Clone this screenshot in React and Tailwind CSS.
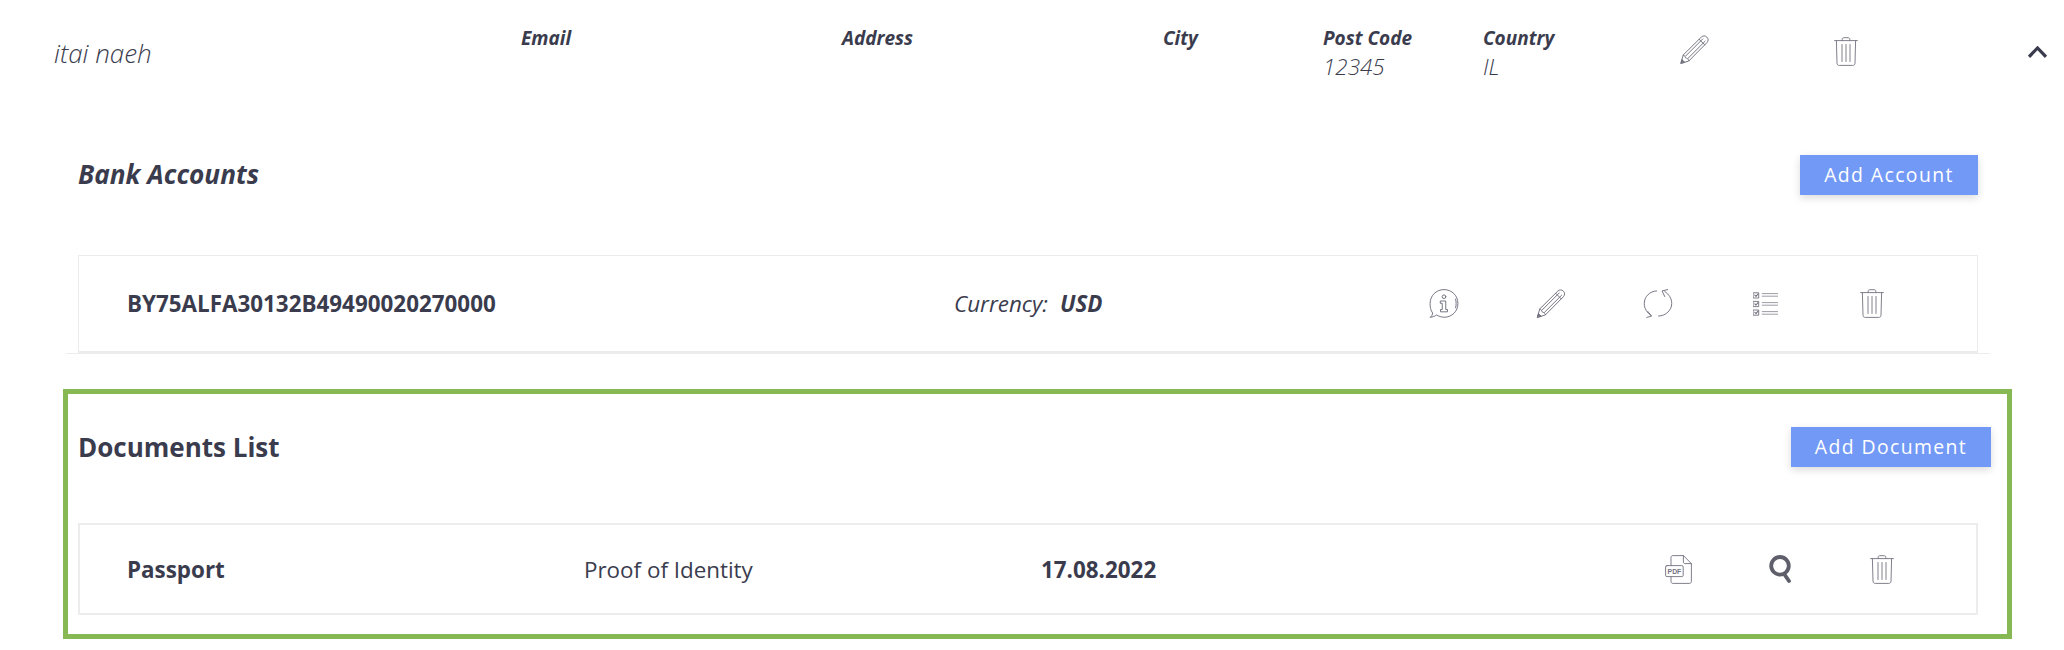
const S = "#72727f";

function Trash({ className }) {
  return (
    <svg viewBox="0 0 24 29" className={className} fill="none" stroke={S} strokeWidth="0.9" strokeLinecap="round" strokeLinejoin="round">
      <path d="M0.6 3.6H23.4" />
      <path d="M8.2 3.4V2.2C8.2 1.2 9 0.7 10 0.7H14C15 0.7 15.8 1.2 15.8 2.2V3.4" />
      <path d="M2.4 3.8L3 26.2C3 27.6 3.9 28.4 5.3 28.4H18.7C20.1 28.4 21 27.6 21 26.2L21.6 3.8" />
      <path d="M8 7.5V24.5M12 7.5V24.5M16 7.5V24.5" />
    </svg>
  );
}

function Pencil({ className }) {
  return (
    <svg viewBox="0 0 30 30" className={className} fill="none" stroke={S} strokeWidth="1" strokeLinejoin="round" strokeLinecap="round">
      <path d="M1 29L3.4 20.6L22 2.2C23.8 0.5 26.2 0.6 27.8 2.2C29.5 3.9 29.5 6.2 27.8 8L9.4 26.6Z" />
      <path d="M3.4 20.6C5 20.8 5.2 22.6 5.8 23.6C7 24.2 9 24.6 9.4 26.6" />
      <path d="M6 21.6L23.6 4M8.4 24L26 6.4M19.8 4.4L25.6 10.2" />
      <path d="M1 29L2 25.4L4.6 28Z" fill={S} />
    </svg>
  );
}

function Info({ className }) {
  return (
    <svg viewBox="0 0 30 30" className={className} fill="none" stroke={S} strokeWidth="1" strokeLinejoin="round" strokeLinecap="round">
      <path d="M1 29.2C2.4 28 3.2 26.4 3.2 24.8C1.2 22 0.6 18.8 0.6 15.2C0.6 7 6.8 0.6 15 0.6C23.2 0.6 29.4 7 29.4 15C29.4 23 23.2 29.2 15.4 29.2C12.2 29.2 9.6 28.2 7.4 26.8C5.6 28.2 3.4 29 1 29.2Z" />
      <path d="M27 10.5C27.8 13 27.8 17 27 19.5" />
      <circle cx="15" cy="8" r="1.9" />
      <path d="M11.6 12.4H16.8V21.2H18.6V23.6H11.4V21.2H13.2V14.8H11.6Z" />
    </svg>
  );
}

function Refresh({ className }) {
  return (
    <svg viewBox="0 0 30 30" className={className} fill="none" stroke={S} strokeWidth="1" strokeLinejoin="round" strokeLinecap="round">
      <path d="M13.6 2C6.4 2.2 0.8 8 0.8 15C0.8 20 3.4 24.4 7.8 27.4" />
      <path d="M4.4 23.2L8.4 28L3.4 29.4" />
      <path d="M15.6 28C23 27.8 29.2 22 29.2 15C29.2 10 26.6 5.6 22 2.6" />
      <path d="M25 0.6L19.2 2L22 7.8" />
    </svg>
  );
}

function Checklist({ className }) {
  return (
    <svg viewBox="0 0 25 24" className={className} fill="none" stroke={S} strokeWidth="0.9" strokeLinecap="round" strokeLinejoin="round">
      <rect x="0.5" y="0.8" width="5.2" height="5.2" />
      <rect x="0.5" y="9.4" width="5.2" height="5.2" />
      <rect x="0.5" y="18" width="5.2" height="5.2" />
      <path d="M1.8 3.2L3 4.4L5 2M1.8 11.8L3 13L5 10.6M1.8 20.4L3 21.6L5 19.2" strokeWidth="1.1" />
      <path d="M9.2 1.6H24.6M9.2 4.2H24.6M9.2 10.6H24.6M9.2 13.2H24.6M9.2 19.6H24.6M9.2 22.2H24.6" strokeWidth="0.7" />
    </svg>
  );
}

function Pdf({ className }) {
  return (
    <svg viewBox="0 0 27 29" className={className} fill="none" stroke={S} strokeWidth="0.9" strokeLinejoin="round" strokeLinecap="round">
      <path d="M6 10.5V2.4C6 1.3 6.8 0.6 8 0.6H18.4L26.4 8.6V26.4C26.4 27.6 25.6 28.4 24.4 28.4H8C6.8 28.4 6 27.6 6 26.4V21.6" />
      <path d="M18.4 0.6V7C18.4 8 19 8.6 20 8.6H26.4" />
      <rect x="0.6" y="10.6" width="17.6" height="11" rx="1.4" />
      <text x="9.4" y="18.8" textAnchor="middle" fontSize="6.8" fontWeight="700" fill={S} stroke="none" fontFamily="'Liberation Sans', sans-serif">PDF</text>
    </svg>
  );
}

function Search({ className }) {
  return (
    <svg viewBox="0 0 22 28" className={className} fill="none" stroke="#5f5f6b" strokeWidth="3.8" strokeLinecap="round">
      <circle cx="11" cy="10.8" r="8.8" />
      <path d="M15.4 19.4L20 26" />
    </svg>
  );
}

function Chevron({ className }) {
  return (
    <svg viewBox="0 0 19 12" className={className} fill="none" stroke="#3a3c4e" strokeWidth="3.2">
      <path d="M1 10.8L9.5 2L18 10.8" />
    </svg>
  );
}

function Field({ label, value, width }) {
  return (
    <div className={width}>
      <div className="font-bold italic text-[19px] leading-[28px]">{label}</div>
      <div className="italic font-light text-[22.4px] leading-[29px]">{value}</div>
    </div>
  );
}

function AddButton({ children, className }) {
  return (
    <button className={`h-10 bg-[#7299f5] text-white text-[19.4px] tracking-[1.4px] shadow-[0_3px_8px_rgba(0,0,0,0.14)] ${className}`}>
      {children}
    </button>
  );
}

export default function App() {
  return (
    <div className="w-[2064px] h-[650px] bg-white overflow-hidden text-[#3a3c4e] font-['Open_Sans',sans-serif]">
      <div className="flex items-start h-[100px] pl-[54px] pt-[24px]">
        <div className="w-[467px] italic font-light text-[26px] leading-[32px] pt-[13px]">itai naeh</div>
        <Field label="Email" value="" width="w-[321px]" />
        <Field label="Address" value="" width="w-[321px]" />
        <Field label="City" value="" width="w-[160px]" />
        <Field label="Post Code" value="12345" width="w-[160px]" />
        <Field label="Country" value="IL" width="w-[197px]" />
        <Pencil className="w-[29px] h-[29px] mt-[11px] shrink-0" />
        <Trash className="w-[24px] h-[29px] ml-[125px] mt-[13px] shrink-0" />
        <Chevron className="w-[19px] h-[12px] ml-[170px] mt-[22px] shrink-0" />
      </div>

      <div className="pl-[78px] pr-[86px] pt-[55px] flex items-center justify-between">
        <h2 className="font-bold italic text-[26.2px] leading-[36px] -mt-[2px]">Bank Accounts</h2>
        <AddButton className="w-[178px]">Add Account</AddButton>
      </div>

      <div className="mt-[60px] ml-[66px] w-[1924px] px-[12px] border-b border-[#ececec]">
        <div className="h-[99px] -mb-px flex items-center pl-[48px] border border-b-[3px] border-[#ececec]">
          <div className="w-[827px] font-bold text-[22.4px] leading-[30px]">BY75ALFA30132B49490020270000</div>
          <div className="w-[475px] text-[22.4px] leading-[30px] italic flex">
            <span className="w-[106px]">Currency:</span>
            <span className="font-bold">USD</span>
          </div>
          <div className="flex items-center gap-[77px]">
            <Info className="w-[30px] h-[29px] shrink-0" />
            <Pencil className="w-[30px] h-[29px] shrink-0" />
            <Refresh className="w-[30px] h-[29px] shrink-0" />
            <div className="w-[30px] flex justify-center shrink-0"><Checklist className="w-[25px] h-[24px]" /></div>
            <div className="w-[30px] flex justify-center shrink-0"><Trash className="w-[24px] h-[29px]" /></div>
          </div>
        </div>
      </div>

      <div className="mt-[35px] ml-[63px] w-[1949px] h-[250px] border-[5px] border-[#86b953] pl-[10px] pr-[29px] pt-[33px]">
        <div className="flex items-center justify-between">
          <h2 className="font-bold text-[26px] leading-[36px]">Documents List</h2>
          <AddButton className="w-[200px] -mr-[13px]">Add Document</AddButton>
        </div>
        <div className="mt-[56px] h-[92px] flex items-center pl-[47px] pt-[2px] border-2 border-[#ececec]">
          <div className="w-[457px] font-bold text-[22.4px]">Passport</div>
          <div className="w-[457px] text-[22.4px]">Proof of Identity</div>
          <div className="w-[624px] font-bold text-[22.4px]">17.08.2022</div>
          <div className="flex items-center -mt-[2px]">
            <Pdf className="w-[27px] h-[29px] shrink-0" />
            <Search className="w-[22px] h-[28px] ml-[77px] shrink-0" />
            <Trash className="w-[24px] h-[29px] ml-[79px] shrink-0" />
          </div>
        </div>
      </div>
    </div>
  );
}
